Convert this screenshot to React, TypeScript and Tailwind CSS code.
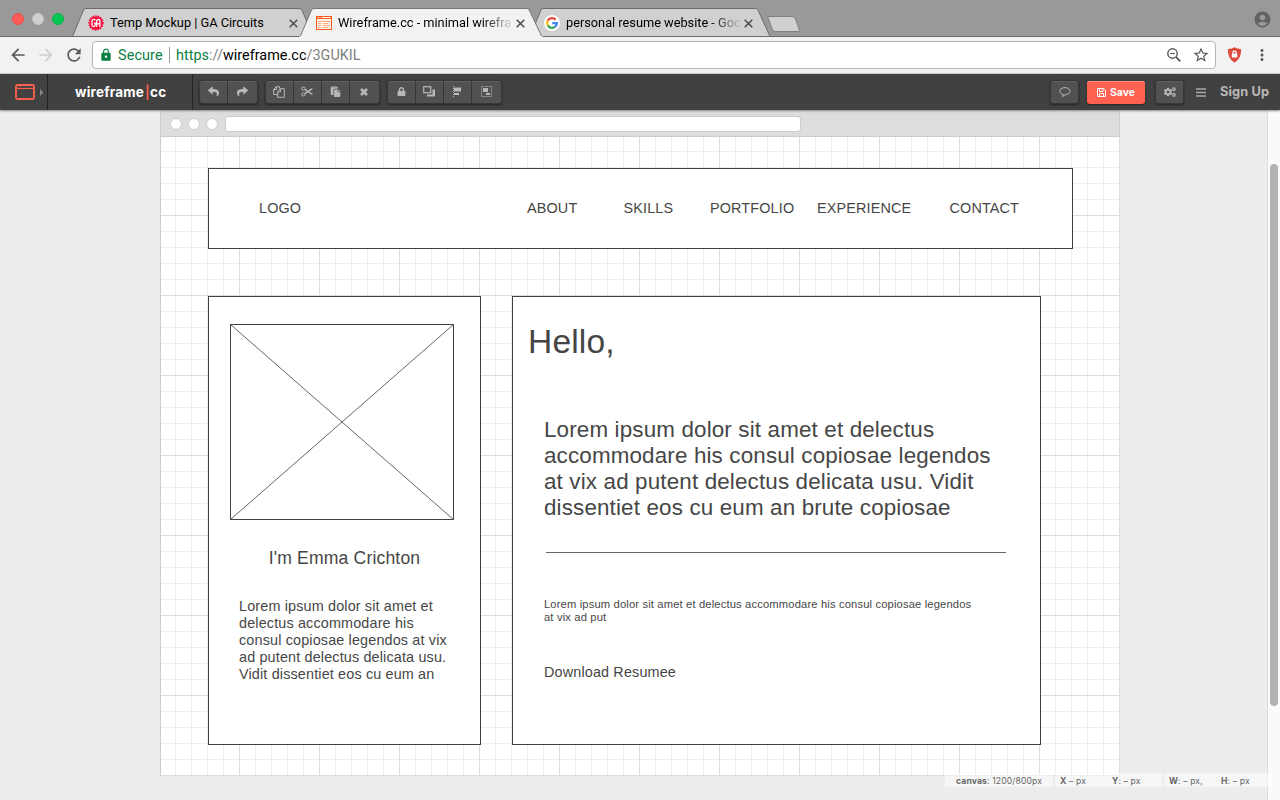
import React from "react";
import { MdArrowBack, MdArrowForward, MdRefresh, MdLock, MdStarBorder, MdMoreVert, MdAccountCircle } from "react-icons/md";
import { FaReply, FaShare, FaPaste, FaLock, FaCogs } from "react-icons/fa";

function CloseIcon() {
  return (
    <svg className="h-[9px] w-[9px] shrink-0" viewBox="0 0 9 9" stroke="#505050" strokeWidth="1.6">
      <path d="M0.7 0.7L8.3 8.3M8.3 0.7L0.7 8.3" />
    </svg>
  );
}

function GaLogo() {
  return (
    <svg className="h-4 w-4 shrink-0" viewBox="0 0 16 16">
      <circle cx="8" cy="8" r="6.8" fill="#f5093b" />
      <circle cx="8" cy="8" r="7.1" fill="none" stroke="#f5093b" strokeWidth="1.3" strokeDasharray="1.5 1.2" />
      <path d="M7.2 5.4C6.8 4 4 4 4 6v4c0 2 3.2 2 3.2 0V8.2H5.9M8.7 12V6c0-2 3.2-2 3.2 0v6M8.7 8.8h3.2" fill="none" stroke="#fff" strokeWidth="1.3" />
    </svg>
  );
}

function WireframeLogo() {
  return (
    <svg className="h-[14px] w-4 shrink-0" viewBox="0 0 16 14">
      <rect x="0.5" y="0.5" width="15" height="13" fill="#fff3ea" stroke="#ff5a1f" />
      <path d="M0 1.5h16" stroke="#ff5a1f" strokeWidth="3" />
      <path d="M1.5 1.5h1M3.5 1.5h1M6 1.5h8.5" stroke="#fff" strokeWidth="1" />
      <path d="M2 5.5h12M2 7.500h3M2 9.500h3M2 11.500h3M7 7.500h5M7 9.500h7M7 11.500h5" stroke="#ffac80" strokeWidth="1" />
    </svg>
  );
}

function GoogleLogo() {
  return (
    <svg className="h-4 w-4 shrink-0" viewBox="0 0 16 16" fill="none" strokeWidth="2.200">
      <circle cx="8" cy="8" r="8" fill="#fff" />
      <path d="M11.6 4.7A4.9 4.9 0 0 0 3.7 5.600" stroke="#ea4335" />
      <path d="M3.700 5.600A4.900 4.900 0 0 0 3.700 10.400" stroke="#fbbc05" />
      <path d="M3.700 10.400A4.900 4.900 0 0 0 11.200 11.700" stroke="#34a853" />
      <path d="M11.200 11.700A4.900 4.900 0 0 0 12.900 8.100H8.200" stroke="#4285f4" />
    </svg>
  );
}

function TabStrip() {
  return (
    <div className="relative flex h-[37px] w-full bg-[#999] text-[12.800px] tracking-[-0.02px] text-black">
      <svg className="absolute inset-0 h-[37px] w-[1280px]" viewBox="0 0 1280 37" strokeWidth="1">
        <path d="M0 36.500H1280" stroke="#6b6b6b" />
        <path d="M72.500 36.500L83.500 10Q84.200 8.500 86 8.500H299Q301 8.500 302 10L313 36.500Z" fill="#d0d0d0" stroke="#6b6b6b" />
        <path d="M530 36.500L541 10Q541.700 8.500 543 8.500H755.500Q757.300 8.500 758 10L770 36.500Z" fill="#d0d0d0" stroke="#6b6b6b" />
        <path d="M300 37L311.500 10Q312.200 8.500 314 8.500H526.500Q528.500 8.500 529.200 10L542 37Z" fill="#f2f2f2" stroke="#777" />
        <path d="M299.500 37H542.500" stroke="#f2f2f2" strokeWidth="2" />
        <path d="M767.500 16.500H792Q794 16.500 795 18L799.500 30Q799.800 31.500 798 31.500H775.500Q773.500 31.500 772.500 29.500Z" fill="#d0d0d0" stroke="#808080" />
      </svg>
      <div className="relative flex w-[88px] items-center gap-2 pl-3 pt-px">
        <i className="h-3 w-3 rounded-full border border-[#e9504c] bg-[#fc5b57]" />
        <i className="h-3 w-3 rounded-full border border-[#c4c4c4] bg-[#d0d0d0]" />
        <i className="h-3 w-3 rounded-full border border-[#0ab04c] bg-[#05c751]" />
      </div>
      <div className="relative flex w-[227px] items-center pt-[9px]">
        <GaLogo />
        <span className="ml-[6px] w-[179px] whitespace-nowrap">Temp Mockup | GA Circuits</span>
        <CloseIcon />
      </div>
      <div className="relative flex w-[228px] items-center pl-px pt-[9px]">
        <WireframeLogo />
        <span className="ml-[6px] w-[174px] whitespace-nowrap [mask-image:linear-gradient(to_right,#000_145px,transparent_176px)]">Wireframe.cc - minimal wirefra</span>
        <span className="ml-[4px] flex"><CloseIcon /></span>
      </div>
      <div className="relative flex w-[228px] items-center pl-px pt-[9px]">
        <GoogleLogo />
        <span className="ml-[6px] w-[174px] whitespace-nowrap [mask-image:linear-gradient(to_right,#000_145px,transparent_176px)]">personal resume website - Goo</span>
        <span className="ml-[4px] flex"><CloseIcon /></span>
      </div>
      <MdAccountCircle className="relative ml-auto mr-[8px] mt-[10px] h-[19px] w-[19px] text-[#636363]" />
    </div>
  );
}

function AddressBar() {
  return (
    <div className="flex h-[37px] items-center border-b border-[#cfcfcf] bg-[#f2f2f2] pl-[8px] text-[#5a5a5a]">
      <MdArrowBack className="h-5 w-5" />
      <MdArrowForward className="ml-[8px] h-5 w-5 text-[#d0d0d0]" />
      <MdRefresh className="ml-[8px] h-5 w-5" />
      <div className="ml-[8px] flex h-7 w-[1124px] items-center rounded-[4px] border border-[#b5b5b5] bg-white pl-[6px] text-[14.400px]">
        <MdLock className="h-[14px] w-[14px] text-[#0b8043]" />
        <span className="ml-[5px] w-[51px] whitespace-nowrap pt-px tracking-[0.100px] text-[#0b8043]">Secure</span>
        <i className="h-4 w-px bg-[#999]" />
        <span className="ml-[6px] whitespace-nowrap pt-px tracking-[0.030px] text-[#808080]"><span className="text-[#0b8043]">https</span>://<span className="text-black">wireframe.cc</span>/3GUKIL</span>
        <svg className="ml-auto h-[14px] w-[14px]" viewBox="0 0 14 14" fill="none" stroke="#5a5a5a">
          <circle cx="5.500" cy="5.500" r="4.700" strokeWidth="1.400" />
          <path d="M3.200 5.500h4.600" strokeWidth="1.200" />
          <path d="M9 9L13.300 13.300" strokeWidth="1.800" />
        </svg>
        <MdStarBorder className="ml-[11px] mr-[5px] h-[18px] w-[18px]" />
      </div>
      <svg className="ml-[11px] h-4 w-[15px]" viewBox="0 0 15 16">
        <path d="M7.500 0.300Q10 2 14 1.900Q14.800 11 7.500 15.700Q0.200 11 1 1.900Q5 2 7.500 0.300Z" fill="#de4b3d" />
        <path d="M5.800 7V5.800a1.700 1.700 0 0 1 3.400 0V7" fill="none" stroke="#fff" strokeWidth="1.200" />
        <rect x="4.800" y="6.500" width="5.400" height="4" fill="#fff" />
      </svg>
      <MdMoreVert className="ml-[11px] h-[18px] w-[18px]" />
    </div>
  );
}

function Group({ children }: { children: React.ReactNode }) {
  return (
    <div className="flex h-6 divide-x divide-[#363636] rounded-[3px] border border-[#363636] bg-[#515151] text-[#b8b8b8] shadow-[0_1px_2px_#252525,inset_0_1px_0_#606060]">
      {React.Children.map(children, (c) => (
        <button className="flex w-[28.250px] items-center justify-center pb-px only:w-[27px]">{c}</button>
      ))}
    </div>
  );
}

function CopyIcon() {
  return (
    <svg className="h-[12px] w-[12px]" viewBox="0 0 12 12" fill="none" stroke="#b8b8b8">
      <path d="M4.500 8.500H0.700V3.500L3.200 0.700H6.500V2.500M3.500 0.700V3.500H0.700" />
      <path d="M4.700 11.300V5.800L7.500 2.700H11.300V11.300ZM7.500 2.700V5.800H4.700" />
    </svg>
  );
}

function CutIcon() {
  return (
    <svg className="h-[11px] w-3" viewBox="0 0 12 11" fill="none" stroke="#b8b8b8">
      <ellipse cx="2.400" cy="2.600" rx="1.800" ry="1.500" />
      <ellipse cx="2.400" cy="8.400" rx="1.800" ry="1.500" />
      <path d="M3.900 3.400L11.300 8.400M3.900 7.600L11.300 2.600" strokeWidth="1.300" />
    </svg>
  );
}

function AppBar() {
  return (
    <header className="relative z-10 flex h-9 items-center bg-[#414141] font-['Inter'] shadow-[0_1px_2px_#888]">
      <div className="flex h-full w-[48px] items-center border-r border-[#242424] pl-[15px]">
        <svg className="h-4 w-5" viewBox="0 0 20 16" fill="none" stroke="#ff5f4f">
          <rect x="1" y="1" width="18" height="14" rx="1.500" strokeWidth="1.800" />
          <path d="M1 4.500h18" strokeWidth="1.200" />
          <path d="M3 2.700h1M5 2.700h1" strokeWidth="0.700" />
        </svg>
        <svg className="ml-[5px] h-[7px] w-1" viewBox="0 0 4 7"><path d="M0 0L3.500 3.500L0 7Z" fill="#858585" /></svg>
      </div>
      <div className="flex h-full w-[145px] items-center border-r border-[#242424] pl-[27px] pt-px text-[13.500px] font-bold tracking-[0.200px] text-white">
        <span className="w-[70px] whitespace-nowrap">wireframe</span>
        <span className="flex w-[5px] justify-center text-[13px] font-semibold text-[#ff5f4f]">|</span>
        <span className="whitespace-nowrap">cc</span>
      </div>
      <div className="ml-[6px] flex gap-[7px]">
        <Group><FaReply size={11} /><FaShare size={11} /></Group>
        <Group><CopyIcon /><CutIcon /><FaPaste size={11} />
          <svg className="h-2 w-2" viewBox="0 0 8 8" stroke="#b8b8b8" strokeWidth="2.600"><path d="M1 1L7 7M7 1L1 7" /></svg>
        </Group>
        <Group>
          <FaLock size={9} />
          <svg className="h-[11px] w-3" viewBox="0 0 12 11"><rect x="0.700" y="0.700" width="7" height="6" fill="none" stroke="#b8b8b8" strokeWidth="1.200" /><path d="M9.500 3.500H12V10.500H4V8.500H9.500Z" fill="#b8b8b8" /></svg>
          <svg className="h-[11px] w-[9px]" viewBox="0 0 9 11" fill="#b8b8b8"><path d="M0.500 0V11" stroke="#b8b8b8" strokeDasharray="1 1" /><path d="M1 1.500h7v4H1zM1 7h5v2H1z" /></svg>
          <svg className="h-[11px] w-[11px]" viewBox="0 0 11 11" fill="#b8b8b8"><rect x="0.500" y="0.500" width="10" height="10" fill="none" stroke="#b8b8b8" strokeDasharray="1 1" /><path d="M2 2h5v4H2zM6 7h3v2H5V7z" /></svg>
        </Group>
      </div>
      <div className="ml-auto flex items-center">
        <Group>
          <svg className="h-[10px] w-3" viewBox="0 0 12 10" fill="none" stroke="#b8b8b8"><path d="M3.200 9.300C4.200 9 4.400 8.400 4.300 7.500C-1 6.500 0 0.600 6 0.600S13 7.200 6.500 7.600Q5.200 9 3.200 9.300Z" /></svg>
        </Group>
        <button className="ml-[8px] mt-px flex h-[23px] w-[58px] items-center justify-center gap-[4px] rounded-[3px] bg-[#ff6150] text-[10.400px] font-bold text-white shadow-[0_1px_2px_#252525,inset_0_1px_0_#ff9085]">
          <svg className="h-[9px] w-[9px]" viewBox="0 0 9 9" fill="none" stroke="#fff"><path d="M0.500 0.500H6.800L8.500 2.200V8.500H0.500ZM2.500 0.500V3.500H6V0.500M2.500 8.500V5.500H6.500V8.500" /></svg>Save
        </button>
        <div className="ml-[10px]"><Group><FaCogs size={12} /></Group></div>
        <svg className="ml-[12px] h-[9px] w-[10px]" viewBox="0 0 10 9"><path d="M0 1h10M0 4.500h10M0 8h10" stroke="#a8a8a8" strokeWidth="1.500" /></svg>
        <span className="ml-[14px] w-[60px] whitespace-nowrap text-[12.800px] font-bold tracking-[0.100px] text-[#b8b8b8]">Sign Up</span>
      </div>
    </header>
  );
}

const gridClass =
  "[background-image:linear-gradient(to_top,#ddd_1px,transparent_1px),linear-gradient(to_left,#ddd_1px,transparent_1px),linear-gradient(to_top,#ededed_1px,transparent_1px),linear-gradient(to_left,#ededed_1px,transparent_1px)] [background-size:80px_80px,80px_80px,16px_16px,16px_16px]";

function Canvas() {
  return (
    <div className="w-[960px] shrink-0">
      <div className="flex h-[26px] items-center border-x border-[#cacaca] bg-[#ddd] pl-[9px] pt-[2px]">
        <i className="h-3 w-3 rounded-[6px] border border-[#ccc] bg-white" />
        <i className="ml-[6px] h-3 w-3 rounded-[6px] border border-[#ccc] bg-white" />
        <i className="ml-[6px] h-3 w-3 rounded-[6px] border border-[#ccc] bg-white" />
        <i className="ml-[7px] h-4 w-[576px] rounded-[3px] border border-[#ccc] bg-white" />
      </div>
      <div className={`h-[640px] bg-white pl-12 pt-8 tracking-[0.150px] text-[#464646] shadow-[inset_1px_0_0_#ccc,inset_0_1px_0_#ccc] ${gridClass}`}>
        <div className="flex h-[81px] w-[865px] items-center border border-[#414141] bg-white pl-[50px] text-[14.400px]">
          <span className="w-[268px]">LOGO</span>
          <span className="w-[96.500px]">ABOUT</span>
          <span className="w-[86.500px]">SKILLS</span>
          <span className="w-[107px]">PORTFOLIO</span>
          <span className="w-[132.500px]">EXPERIENCE</span>
          <span>CONTACT</span>
        </div>
        <div className="mt-[47px] flex gap-[31px]">
          <div className="h-[449px] w-[273px] border border-[#414141] bg-white pl-[21px] pt-[27px]">
            <svg className="h-[196px] w-[224px]" viewBox="0 0 224 196" fill="none" stroke="#414141">
              <rect x="0.500" y="0.500" width="223" height="195" />
              <path d="M0.500 0.500L223.500 195.500M223.500 0.500L0.500 195.500" stroke="#666" />
            </svg>
            <p className="mt-[28px] w-[229px] whitespace-nowrap text-center text-[17.600px] leading-[21px]">I'm Emma Crichton</p>
            <p className="ml-[9px] mt-[29px] whitespace-nowrap text-[14.400px] leading-[17px]">Lorem ipsum dolor sit amet et<br />delectus accommodare his<br />consul copiosae legendos at vix<br />ad putent delectus delicata usu.<br />Vidit dissentiet eos cu eum an</p>
          </div>
          <div className="h-[449px] w-[529px] border border-[#414141] bg-white pt-[25px]">
            <h1 className="ml-[15px] whitespace-nowrap text-[33.600px] leading-[40px]">Hello,</h1>
            <p className="ml-[31px] mt-[55px] whitespace-nowrap text-[22.400px] leading-[26px]">Lorem ipsum dolor sit amet et delectus<br />accommodare his consul copiosae legendos<br />at vix ad putent delectus delicata usu. Vidit<br />dissentiet eos cu eum an brute copiosae</p>
            <div className="ml-[33px] mt-[31px] h-px w-[460px] bg-[#666]" />
            <p className="ml-[31px] mt-[45px] whitespace-nowrap text-[11.200px] leading-[13px]">Lorem ipsum dolor sit amet et delectus accommodare his consul copiosae legendos<br />at vix ad put</p>
            <p className="ml-[31px] mt-[40px] whitespace-nowrap text-[14.400px] leading-[17px]">Download Resumee</p>
          </div>
        </div>
      </div>
    </div>
  );
}

export default function App() {
  return (
    <div className="relative flex h-[800px] w-[1280px] flex-col overflow-hidden bg-[#ededed] font-['Roboto']">
      <TabStrip />
      <AddressBar />
      <AppBar />
      <main className="flex flex-1 pl-[160px] font-['Liberation_Sans']">
        <Canvas />
        <div className="ml-auto w-[13px] border-l border-[#ddd] bg-[#fafafa] pl-[2px] pt-[54px]">
          <div className="h-[542px] w-2 rounded-full bg-[#b2b2b2]" />
        </div>
      </main>
      <footer className="absolute bottom-[13px] right-[9px] flex h-[14px] gap-[2px] font-['Inter'] text-[8.600px] leading-[16px] tracking-[0.130px] text-[#666]">
        <span className="w-[108px] whitespace-nowrap bg-white/50 pl-[11px]"><b>canvas</b>: 1200/800px</span>
        <span className="flex w-[107px] whitespace-nowrap bg-white/50 pl-[5px]"><span className="w-[52px]"><b>X</b> – px</span><span><b>Y</b>: – px</span></span>
        <span className="flex w-[107px] whitespace-nowrap bg-white/50 pl-[5px]"><span className="w-[52px]"><b>W</b>: – px,</span><span><b>H</b>: – px</span></span>
      </footer>
    </div>
  );
}
